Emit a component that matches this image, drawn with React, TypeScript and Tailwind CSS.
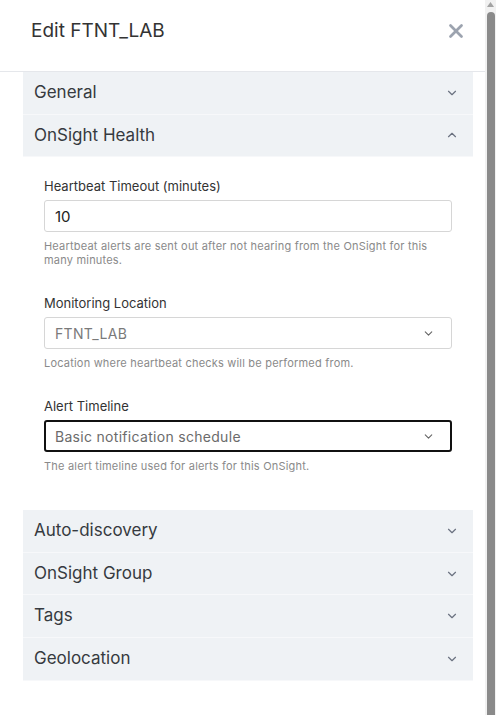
import { ChevronDown, ChevronUp, X } from 'lucide-react';

type FieldProps = {
  label: string;
  help: string;
  children: React.ReactNode;
};

function Field({ label, help, children }: FieldProps) {
  return (
    <div className="flex flex-col">
      <label className="mb-[6px] text-[13px] leading-[16px] text-[#333]">{label}</label>
      {children}
      <p className="mt-[7px] text-[11px] leading-[14px] tracking-[0.2px] text-[#8a8a8a]">{help}</p>
    </div>
  );
}

function SectionHeader({ title, open = false }: { title: string; open?: boolean }) {
  return (
    <button className="flex h-[42.6px] w-full items-center justify-between border-b border-[#f7f8fa] bg-[#eff2f5] pr-[14px] pl-[11px] text-left">
      <span className="text-[17px] text-[#363a40]">{title}</span>
      {open ? (
        <ChevronUp className="h-[14px] w-[14px] text-[#6b7280]" strokeWidth={2} />
      ) : (
        <ChevronDown className="h-[14px] w-[14px] text-[#6b7280]" strokeWidth={2} />
      )}
    </button>
  );
}

export default function App() {
  return (
    <div
      className="flex h-[715px] w-[496px] overflow-hidden bg-white"
      style={{ fontFamily: 'Inter, "Noto Sans", sans-serif' }}
    >
      {/* Drawer */}
      <div className="flex w-[485px] flex-col">
        <div className="flex h-[72px] shrink-0 items-center justify-between border-b border-[#e5e7eb] pr-[18px] pl-[31px] pb-[9px]">
          <h1 className="text-[19px] text-[#333]">Edit FTNT_LAB</h1>
          <X className="h-[22px] w-[22px] text-[#9ca3af]" strokeWidth={3} />
        </div>

        <div className="flex flex-col pr-[12px] pl-[23px]">
          <SectionHeader title="General" />
          <SectionHeader title="OnSight Health" open />

          <div className="flex flex-col gap-[28px] px-[21px] pt-[21px] pb-[37px]">
            <Field
              label="Heartbeat Timeout (minutes)"
              help="Heartbeat alerts are sent out after not hearing from the OnSight for this many minutes."
            >
              <input
                defaultValue="10"
                className="h-[32px] rounded-[3px] border border-[#d6d6d6] px-[10px] text-[15px] text-[#222] outline-none"
              />
            </Field>

            <Field label="Monitoring Location" help="Location where heartbeat checks will be performed from.">
              <div className="flex h-[32px] items-center justify-between rounded-[3px] border border-[#d6d6d6] pr-[16px] pl-[10px]">
                <span className="text-[14px] tracking-[0.3px] text-[#7a7a7a]">FTNT_LAB</span>
                <ChevronDown className="h-[13px] w-[13px] text-[#666]" strokeWidth={2} />
              </div>
            </Field>

            <Field label="Alert Timeline" help="The alert timeline used for alerts for this OnSight.">
              <div className="flex h-[32px] items-center justify-between rounded-[3px] border-2 border-[#111] pr-[15px] pl-[9px]">
                <span className="text-[14px] tracking-[0.3px] text-[#6b6b6b]">Basic notification schedule</span>
                <ChevronDown className="h-[13px] w-[13px] text-[#666]" strokeWidth={2} />
              </div>
            </Field>
          </div>

          <SectionHeader title="Auto-discovery" />
          <SectionHeader title="OnSight Group" />
          <SectionHeader title="Tags" />
          <SectionHeader title="Geolocation" />
        </div>
      </div>

      {/* Scrollbar */}
      <div className="flex w-[11px] flex-col items-center bg-[#f1f1f1]">
        <svg width="9" height="7" viewBox="0 0 9 7" className="mt-[1px]">
          <path d="M4.5 1 L8 6 L1 6 Z" fill="#a3a3a3" />
        </svg>
        <div className="mt-[4px] w-[8px] flex-1 rounded-t-[4px] bg-[#8a8a8a]" />
      </div>
    </div>
  );
}
